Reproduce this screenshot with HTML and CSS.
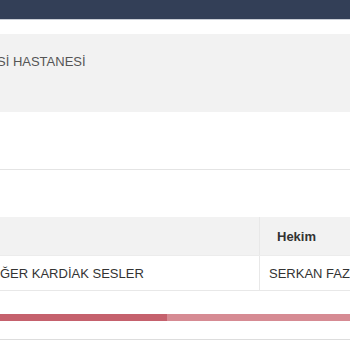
FILE: index.html
```html
<!DOCTYPE html>
<html lang="tr">
<head>
<meta charset="utf-8">
<link rel="stylesheet" href="styles.css">
</head>
<body>
<div class="page">
  <div class="topbar"></div>
  <div class="panel"><span class="panel-text">Sİ HASTANESİ</span></div>
  <div class="divider"></div>
  <table class="grid">
    <thead>
      <tr><th class="col-a"></th><th class="col-b">Hekim</th></tr>
    </thead>
    <tbody>
      <tr><td class="col-a">ĞER KARDİAK SESLER</td><td class="col-b">SERKAN FAZLI</td></tr>
    </tbody>
  </table>
  <div class="progress">
    <div class="seg seg-dark" style="width:167px"></div>
    <div class="seg seg-light"></div>
  </div>
  <div class="footer-line"></div>
</div>
</body>
</html>
```
FILE: styles.css
```css
html, body {
  margin: 0;
  padding: 0;
  background: #ffffff;
  overflow: hidden;
}
.page {
  width: 350px;
  height: 350px;
  overflow: hidden;
  font-family: "Liberation Sans", Arial, Helvetica, sans-serif;
  font-size: 13px;
  color: #333333;
}
.topbar {
  height: 19px;
  background: #333f57;
  border-bottom: 1px solid #c9cdd5;
}
.panel {
  margin-top: 14px;
  height: 78px;
  background: #f2f2f2;
  box-sizing: border-box;
  padding-top: 19px;
  line-height: 18px;
  color: #555555;
  white-space: nowrap;
}
.panel-text {
  display: inline-block;
  margin-left: -3px;
}
.divider {
  margin-top: 57px;
  height: 1px;
  background: #e4e4e4;
}
.grid {
  margin-top: 47px;
  width: 420px;
  border-collapse: collapse;
  table-layout: fixed;
  white-space: nowrap;
}
.grid th, .grid td {
  padding: 0;
  text-align: left;
  overflow: hidden;
}
.grid th {
  height: 38px;
  background: #f2f2f2;
  font-weight: bold;
  color: #333333;
  border-bottom: 1px solid #ececec;
}
.grid td {
  height: 34px;
  border-bottom: 1px solid #e8e8e8;
  color: #333333;
}
.grid .col-a {
  width: 259px;
  border-right: 1px solid #e8e8e8;
}
.grid th.col-b {
  padding-left: 17px;
}
.grid td.col-b {
  padding-left: 9px;
}
.progress {
  margin-top: 23px;
  height: 7px;
  display: flex;
}
.seg {
  height: 100%;
}
.seg-dark {
  background: #c5616d;
}
.seg-light {
  flex: 1;
  background: #d68b93;
}
.footer-line {
  margin-top: 18px;
  height: 1px;
  background: #dddddd;
}
```
